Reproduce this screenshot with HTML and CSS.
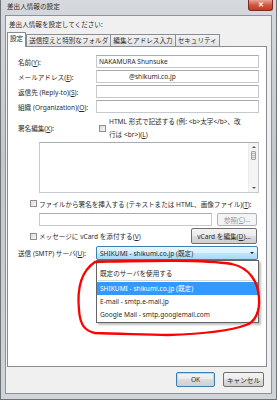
FILE: index.html
```html
<!DOCTYPE html>
<html lang="ja">

<head>
    <meta charset="UTF-8">
    <meta name="viewport" content="width=device-width, initial-scale=1.0">
    <title>差出人情報の設定</title>

    <link rel="stylesheet" href="styles.css">
</head>

<body>
    <div class="window">
        <div class="titlebar">
            <span class="title">差出人情報の設定</span>
            <span class="close-btn">✕</span>
        </div>
        <div class="client">
            <div class="prompt">差出人情報を設定してください:</div>
            <div class="tabs">
                <span class="tab active">設定</span>
                <span class="tab">送信控えと特別なフォルダ</span>
                <span class="tab">編集とアドレス入力</span>
                <span class="tab">セキュリティ</span>
            </div>
            <div class="panel">
                <div class="field-row">
                    <label>名前(<u>Y</u>):</label>
                    <div class="textbox">NAKAMURA Shunsuke</div>
                </div>
                <div class="field-row">
                    <label>メールアドレス(<u>E</u>):</label>
                    <div class="textbox masked">@shikumi.co.jp</div>
                </div>
                <div class="field-row">
                    <label>返信先 (Reply-to)(<u>S</u>):</label>
                    <div class="textbox"></div>
                </div>
                <div class="field-row">
                    <label>組織 (Organization)(<u>O</u>):</label>
                    <div class="textbox"></div>
                </div>

                <div class="sig-row">
                    <label>署名編集(<u>X</u>):</label>
                    <span class="checkbox"></span>
                    <span class="sig-text">HTML 形式で記述する (例: &lt;b&gt;太字&lt;/b&gt;、改<br>行は &lt;br&gt;)(<u>L</u>)</span>
                </div>
                <div class="textarea">
                    <div class="scrollbar">
                        <span class="arrow up"></span>
                        <span class="thumb"></span>
                        <span class="arrow down"></span>
                    </div>
                </div>

                <div class="check-row">
                    <span class="checkbox"></span>
                    <span>ファイルから署名を挿入する (テキストまたは HTML、画像ファイル)(<u>T</u>):</span>
                </div>
                <div class="file-row">
                    <div class="textbox"></div>
                    <span class="button disabled">参照(<u>C</u>)...</span>
                </div>

                <div class="vcard-row">
                    <span class="checkbox"></span>
                    <span class="vcard-text">メッセージに vCard を添付する(<u>V</u>)</span>
                    <span class="button vcard-btn">vCard を編集(<u>D</u>)...</span>
                </div>

                <div class="field-row smtp-row">
                    <label>送信 (SMTP) サーバ(<u>U</u>):</label>
                    <div class="combo-wrap">
                        <div class="combo">
                            <span>SHIKUMI - shikumi.co.jp (既定)</span>
                            <span class="combo-arrow"></span>
                        </div>
                        <ul class="dropdown">
                            <li>既定のサーバを使用する</li>
                            <li class="separator"></li>
                            <li class="selected">SHIKUMI - shikumi.co.jp (既定)</li>
                            <li>E-mail - smtp.e-mail.jp</li>
                            <li>Google Mail - smtp.googlemail.com</li>
                        </ul>
                    </div>
                </div>
            </div>
            <div class="buttons">
                <span class="button ok">OK</span>
                <span class="button cancel">キャンセル</span>
            </div>
        </div>

        <!-- red marker drawn over the screenshot -->
        <svg class="marker" width="277" height="400" viewBox="0 0 277 400">
            <path d="M 95 262 C 140 261, 200 259, 232 264 C 250 268, 258 282, 259 298 C 260 312, 255 322, 246 325 C 230 331, 200 334, 168 335 C 140 334, 115 334, 95 333 C 85 331, 80 325, 79 310 C 77 290, 80 272, 95 262"
                fill="none" stroke="#ff0000" stroke-width="2.3" stroke-linecap="round" />
        </svg>
    </div>
</body>

</html>
```

FILE: styles.css
```css
html {
    height: 100%;
}

body {
    margin: 0;
    padding: 0;
    width: 277px;
    height: 400px;
    overflow: hidden;
    font-family: "Noto Sans", "Noto Sans CJK JP", sans-serif;
    font-size: 6.6px;
    color: #2b2b2b;
    background: #c4c9ce;
}

.window {
    position: relative;
    height: 400px;
    box-sizing: border-box;
    padding: 0 4px 5px 4px;
    display: flex;
    flex-direction: column;
    background: linear-gradient(180deg, #d5d9dd, #c2c7cc 40%, #d0d4d8);
    border: 1px solid #6f7479;
    border-top: none;
}

.titlebar {
    height: 15px;
    display: flex;
    justify-content: space-between;
    align-items: flex-start;
}

.title {
    padding-left: 2px;
    line-height: 13px;
    color: #2a2a2a;
}

.close-btn {
    width: 25px;
    height: 11px;
    margin-right: -1px;
    box-sizing: border-box;
    border: 1px solid #7d2b20;
    border-top: none;
    border-radius: 0 0 3px 3px;
    background: linear-gradient(180deg, #e8a599, #d4553f 50%, #c13a22);
    color: #fff;
    font-size: 7px;
    font-weight: bold;
    line-height: 10px;
    text-align: center;
}

.client {
    flex: 1;
    display: flex;
    flex-direction: column;
    padding: 0 4px 0 1px;
    background: #f0f0f0;
    border: 1px solid #8d9296;
}

.prompt {
    height: 19px;
    line-height: 17px;
    padding-left: 2px;
}

/* tabs */

.tabs {
    display: flex;
    align-items: flex-end;
    height: 14px;
    margin-top: -2px;
    margin-bottom: -1px;
    position: relative;
    z-index: 1;
}

.tab {
    height: 11px;
    line-height: 11px;
    padding: 0 2px;
    margin-bottom: 1px;
    margin-left: -1px;
    border: 1px solid #898c95;
    border-bottom: none;
    background: linear-gradient(180deg, #f3f3f3, #e2e2e2);
    white-space: nowrap;
}

.tab.active {
    height: 13px;
    line-height: 12px;
    margin-left: 0;
    margin-right: 1px;
    margin-bottom: 0;
    padding: 0 2px 1px;
    background: #fff;
    position: relative;
    z-index: 2;
}

.panel {
    box-sizing: border-box;
    height: 321px;
    padding: 8px 7px 0 10px;
    background: #fff;
    border: 1px solid #898c95;
}

/* form rows */

.field-row {
    display: flex;
    align-items: center;
    height: 13px;
    margin-bottom: 2px;
}

.field-row label {
    width: 78px;
    flex-shrink: 0;
    white-space: nowrap;
}

.textbox {
    flex: 1;
    height: 13px;
    box-sizing: border-box;
    padding: 0 2px;
    line-height: 11px;
    background: #fff;
    border: 1px solid #c5c8cd;
    border-top-color: #a7abb2;
    white-space: nowrap;
}

.textbox.masked {
    padding-left: 32px;
}

.checkbox {
    width: 7px;
    height: 7px;
    flex-shrink: 0;
    box-sizing: border-box;
    border: 1px solid #8f8f8f;
    background: linear-gradient(135deg, #dcdcdc, #f6f6f6);
}

.sig-row {
    display: flex;
    align-items: center;
    margin-top: 2px;
}

.sig-row label {
    width: 81px;
    flex-shrink: 0;
}

.sig-row .checkbox {
    margin-right: 3px;
}

.sig-text {
    line-height: 13px;
}

.textarea {
    height: 51px;
    box-sizing: border-box;
    margin: 1px 0 0 21px;
    border: 1px solid #c5c8cd;
    border-top-color: #a7abb2;
    display: flex;
    justify-content: flex-end;
}

.scrollbar {
    width: 9px;
    display: flex;
    flex-direction: column;
    align-items: center;
    background: #f4f4f4;
    border-left: 1px solid #ececec;
}

.arrow {
    width: 0;
    height: 0;
    margin: 3px 0;
    border-left: 2px solid transparent;
    border-right: 2px solid transparent;
}

.arrow.up {
    border-bottom: 2px solid #5a5a5a;
}

.arrow.down {
    margin-top: auto;
    border-top: 2px solid #5a5a5a;
}

.thumb {
    width: 5px;
    height: 9px;
    box-sizing: border-box;
    border: 1px solid #9da2a8;
    border-radius: 1px;
    background: repeating-linear-gradient(180deg, #e8e8e8 0, #e8e8e8 1px, #b7bcc2 1px, #b7bcc2 2px);
}

.check-row {
    display: flex;
    align-items: center;
    height: 13px;
    margin: 4px 0 0 12px;
}

.check-row .checkbox {
    margin-right: 2px;
}

.file-row {
    display: flex;
    align-items: center;
    gap: 5px;
    margin: 3px 2px 0 21px;
}

.button {
    display: flex;
    align-items: center;
    justify-content: center;
    box-sizing: border-box;
    border: 1px solid #707070;
    border-radius: 2px;
    background: linear-gradient(180deg, #f3f3f3, #ebebeb 50%, #dddddd 50%, #cfcfcf);
    white-space: nowrap;
}

.file-row .button {
    width: 40px;
    height: 13px;
}

.button.disabled {
    color: #9a9a9a;
    border-color: #adb2b5;
    background: #f4f4f4;
}

.vcard-row {
    display: flex;
    align-items: center;
    height: 16px;
    margin: 2px 2px 0 12px;
}

.vcard-row .checkbox {
    margin-right: 2px;
}

.vcard-btn {
    margin-left: auto;
    width: 66px;
    height: 16px;
}

.smtp-row {
    height: 14px;
    margin-top: 2px;
}

.combo-wrap {
    flex: 1;
    margin-right: 1px;
    position: relative;
}

.combo {
    height: 14px;
    box-sizing: border-box;
    padding: 0 3px;
    display: flex;
    align-items: center;
    justify-content: space-between;
    border: 1px solid #3c7fb1;
    border-radius: 2px;
    background: linear-gradient(180deg, #eaf6fd, #d9f0fc 50%, #bee6fd 50%, #a7d9f5);
}

.combo-arrow {
    width: 0;
    height: 0;
    border-left: 2px solid transparent;
    border-right: 2px solid transparent;
    border-top: 2px solid #222;
}

.dropdown {
    position: absolute;
    top: 100%;
    left: 0;
    right: -1px;
    margin: 0;
    padding: 6px 0 0;
    height: 63px;
    box-sizing: border-box;
    list-style: none;
    background: #fff;
    border: 1px solid #646464;
    box-shadow: 2px 2px 2px rgba(0, 0, 0, 0.25);
    z-index: 5;
}

.dropdown li {
    height: 13px;
    line-height: 13px;
    padding-left: 3px;
    white-space: nowrap;
}

.dropdown li.separator {
    height: 1px;
    margin: 0 1px 1px;
    background: #d7d7d7;
}

.dropdown li.selected {
    background: #3399ff;
    color: #fff;
}

/* dialog buttons */

.buttons {
    display: flex;
    justify-content: flex-end;
    gap: 8px;
    margin-top: 5px;
    padding-right: 3px;
}

.buttons .button {
    height: 15px;
}

.button.ok {
    width: 39px;
    border-color: #3c7fb1;
    box-shadow: inset 0 0 0 1px #a8dcf8;
}

.button.cancel {
    width: 41px;
}

.marker {
    position: absolute;
    left: -1px;
    top: 0;
    pointer-events: none;
    z-index: 10;
}
```
